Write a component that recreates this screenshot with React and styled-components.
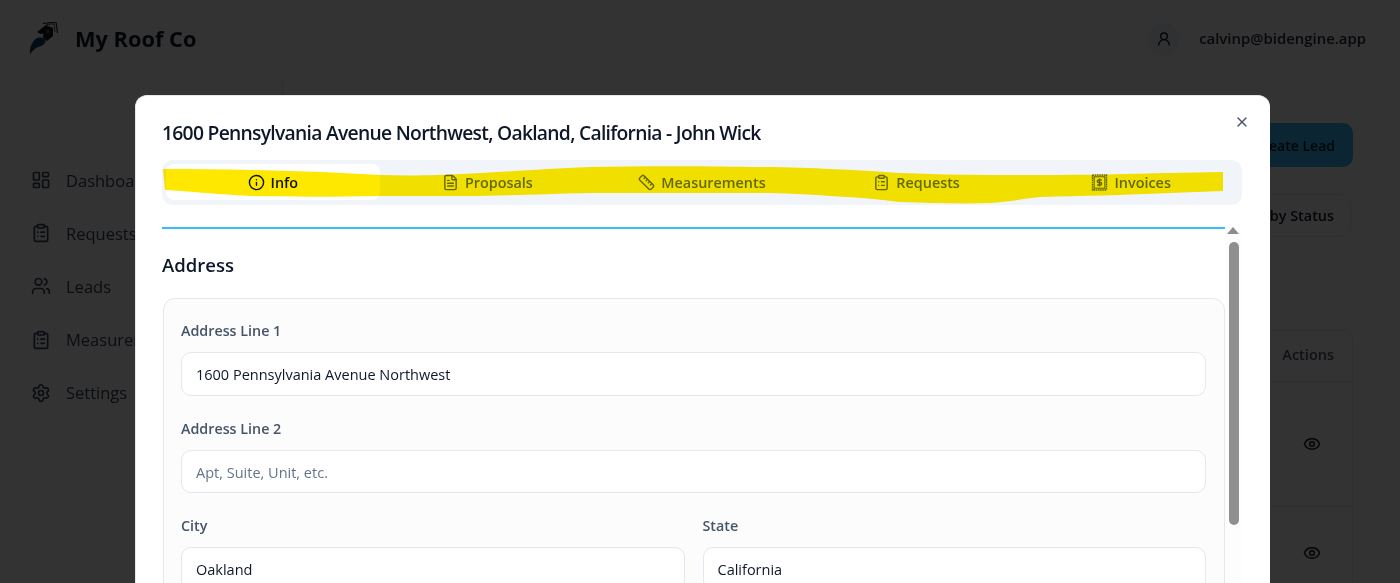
import React from "react";
import styled, { createGlobalStyle } from "styled-components";
import {
  LayoutDashboard, ClipboardList, Users, Settings, Info, FileText, Ruler, X, Eye, UserRound,
} from "lucide-react";

const Global = createGlobalStyle`
  html, body { margin: 0; height: 100%; overflow: hidden; background: #fff; }
  body { font-family: "Open Sans", "Noto Sans", sans-serif; color: #0f172a; }
  * { box-sizing: border-box; }
`;

const Page = styled.div`
  width: 1400px; height: 583px; overflow: hidden; display: flex; flex-direction: column; position: relative;
`;
const Header = styled.header`
  height: 78px; flex: none; display: flex; align-items: center; justify-content: space-between; padding: 0 34px 0 29px;
`;
const Brand = styled.div`display: flex; align-items: center; gap: 16px;`;
const BrandName = styled.span`font-size: 21.8px; font-weight: 700; color: #0f172a; padding-bottom: 2px;`;
const UserBox = styled.div`display: flex; align-items: center; gap: 19px;`;
const Avatar = styled.span`
  width: 33px; height: 33px; border-radius: 50%; background: #f1f5f9; display: flex; align-items: center; justify-content: center; color: #0f172a;
`;
const Email = styled.span`font-size: 14.9px; font-weight: 600; color: #1e293b; padding-bottom: 2px;`;
const Body = styled.div`flex: 1; display: flex; min-height: 0;`;
const Sidebar = styled.nav`
  width: 283px; flex: none; border-right: 1px solid #e2e8f0; padding: 89px 0 0 31px; display: flex; flex-direction: column; gap: 27.2px;
`;
const NavItem = styled.div`display: flex; align-items: center; gap: 15px; height: 26px; font-size: 16.5px; color: #334155;`;
const Main = styled.main`flex: 1; padding: 45px 47px 0 24px; display: flex; flex-direction: column; align-items: flex-end;`;
const PrimaryButton = styled.button`
  flex: none; height: 44px; padding: 0 18px; border: 0; border-radius: 10px; background: #38bdf8; color: #0f172a; font: 600 14px "Open Sans", sans-serif; display: flex; align-items: center; justify-content: center;
`;
const OutlineButton = styled.button`
  flex: none; margin-top: 27px; margin-right: 2px; height: 43px; padding: 0 16px; border: 1px solid #e2e8f0; border-radius: 10px; background: #fff; color: #0f172a; font: 600 14.4px "Open Sans", sans-serif;
`;
const Table = styled.div`
  margin-top: 93px; width: 100%; border: 1px solid #e2e8f0; border-radius: 10px; flex: none;
`;
const HeadRow = styled.div`height: 51px; display: flex; align-items: center; justify-content: flex-end; padding: 0 18px 4px 0; font-size: 14.5px; font-weight: 600; color: #475569; border-bottom: 1px solid #e2e8f0;`;
const Row = styled.div`height: ${p => p.$h}px; display: flex; align-items: center; justify-content: flex-end; padding-right: 31px; border-bottom: 1px solid #e2e8f0; color: #0f172a;`;

const Overlay = styled.div`position: absolute; inset: 0; background: rgba(0,0,0,.8);`;
const Modal = styled.section`
  position: absolute; left: 135px; top: 95px; width: 1135px; height: 560px; background: #fff; border-radius: 12px; padding: 23px 27px 24px 26px; border: 1px solid #e2e8f0; border-width: 1px 0 0 1px;
`;
const Title = styled.h2`margin: 0; font-size: 19.3px; line-height: 28px; font-weight: 600; letter-spacing: -0.72px; color: #0f172a;`;
const CloseButton = styled.button`
  position: absolute; top: 18px; right: 20px; width: 16px; height: 16px; padding: 0; border: 0; background: none; color: #475569; display: flex;
`;
const TabBar = styled.div`
  position: relative; margin-top: 13px; height: 45px; border-radius: 10px; background: #f1f5f9; padding: 4px; display: grid; grid-template-columns: repeat(5, 1fr); gap: 1px; width: 1080px;
`;
const Tab = styled.div`
  height: 36px; border-radius: 8px; background: ${p => (p.$active ? "#fff" : "transparent")}; color: ${p => (p.$active ? "#0f172a" : "#64748b")}; display: flex; align-items: center; justify-content: center; gap: 6px; font-size: 14.4px; font-weight: 600;
`;
const Highlight = styled.svg`
  position: absolute; left: 0; top: 0; width: 1080px; height: 45px; mix-blend-mode: multiply; pointer-events: none; overflow: visible;
`;
const ScrollArea = styled.div`display: flex; margin-top: 22px;`;
const Content = styled.div`width: 1063px; border-top: 2px solid #38bdf8; flex: none;`;
const SectionTitle = styled.h3`margin: 22px 0 19px; font-size: 18.5px; line-height: 28px; font-weight: 600; color: #0f172a;`;
const Card = styled.div`
  border: 1px solid #e2e8f0; border-radius: 12px; background: #fcfcfc; padding: 21px 18px 0 17px; margin-left: 1px; display: flex; flex-direction: column; gap: 22px; height: 400px;
`;
const Field = styled.div`display: flex; flex-direction: column; gap: 10px; min-width: 0;`;
const ColumnField = styled(Field)`flex: 1;`;
const Label = styled.label`font-size: 14.3px; line-height: 22px; font-weight: 600; color: #475569;`;
const Input = styled.input`
  width: 100%; height: 43.5px; flex: none; border: 1px solid #e2e8f0; border-radius: 10px; background: #fff; padding: 2px 14px 0; font: 400 14.5px "Open Sans", sans-serif; color: #0f172a;
  &::placeholder { color: #64748b; opacity: 1; }
`;
const Columns = styled.div`display: flex; gap: 18px;`;
const Scrollbar = styled.div`width: 16px; flex: none; display: flex; flex-direction: column; align-items: center; background: #fdfdfd; height: 400px;`;
const ArrowUp = styled.span`
  width: 0; height: 0; border-left: 6px solid transparent; border-right: 6px solid transparent; border-bottom: 7px solid #8c8c8c;
`;
const Thumb = styled.span`width: 10px; height: 283px; margin-top: 8px; margin-left: 2px; background: #8f8f8f; border-radius: 5px;`;

const InvoiceIcon = ({ size = 16 }) => (
  <svg width={size} height={size} viewBox="0 0 16 16" fill="none" stroke="currentColor">
    <rect x="1.5" y="1" width="13" height="14" strokeWidth="1.5" strokeDasharray="1.5 0.6" />
    <rect x="3" y="2.6" width="10" height="10.8" strokeWidth="1" />
    <path d="M10.200 5.600H7.200a1.200 1.200 0 0 0 0 2.400h1.600a1.200 1.200 0 0 1 0 2.400H5.800M8 4.300v7.400" strokeWidth="1.400" />
  </svg>
);
const Logo = () => (
  <svg width="30" height="34" viewBox="0 0 30 34" fill="none">
    <path d="M8 10 17 3l7 3v8l-6 5-4-4 .5-3.500-3 .5Z" fill="#141414" />
    <path d="M17 7.500h3.500v4H17Z" fill="#4a4a4a" />
    <path d="M14 1.500 27 0l1.500 11" stroke="#161616" strokeWidth="1.100" />
    <path d="M17 2.500 25 1.800l1 8" stroke="#161616" strokeWidth="0.800" />
    <path d="M10 15.500c4-.5 7 .5 6.500 3.500-.5 3.500-4.500 5.500-7.500 6-2.500 1-5.500 3.500-8 7.500-.5-5 .5-9.500 3-12.500C5.500 17.500 7.500 16 10 15.500Z" fill="#0b3f63" />
  </svg>
);

const tabs = [
  ["Info", Info], ["Proposals", FileText], ["Measurements", Ruler], ["Requests", ClipboardList], ["Invoices", InvoiceIcon],
];
const nav = [
  ["Dashboard", LayoutDashboard], ["Requests", ClipboardList], ["Leads", Users], ["Measurements", ClipboardList], ["Settings", Settings],
];

export default function App() {
  return (
    <Page>
      <Global />
      <Header>
        <Brand><Logo /><BrandName>My Roof Co</BrandName></Brand>
        <UserBox>
          <Avatar><UserRound size={16} /></Avatar>
          <Email>calvinp@bidengine.app</Email>
        </UserBox>
      </Header>
      <Body>
        <Sidebar>
          {nav.map(([label, Icon]) => (
            <NavItem key={label}><Icon size={20} />{label}</NavItem>
          ))}
        </Sidebar>
        <Main>
          <PrimaryButton>Create Lead</PrimaryButton>
          <OutlineButton>Filter by Status</OutlineButton>
          <Table>
            <HeadRow>Actions</HeadRow>
            <Row $h={125}><Eye size={18} /></Row>
            <Row $h={93}><Eye size={18} /></Row>
          </Table>
        </Main>
      </Body>
      <Overlay />
      <Modal>
        <Title>1600 Pennsylvania Avenue Northwest, Oakland, California - John Wick</Title>
        <CloseButton aria-label="Close"><X size={16} /></CloseButton>
        <TabBar>
          {tabs.map(([label, Icon], i) => (
            <Tab key={label} $active={i === 0}><Icon size={17} />{label}</Tab>
          ))}
          <Highlight viewBox="0 0 1080 45" preserveAspectRatio="none">
            <path d="M1 9 C30 9 60 9 88 10 C140 11 180 13 218 15 C250 16 280 15 300 14 C340 12 380 9 428 7 C480 6 540 6 588 7 C620 7 650 8 668 9 C700 10 720 12 738 13 C770 14 800 15 828 15 C850 15 860 15 878 15 C920 15 970 14 1008 13 L1061 12 L1061 31 L1008 33 C960 35 920 36 878 37 C860 39 845 42 828 43 C800 44 770 43 738 42 C715 39 690 37 668 36 C640 34 610 33 588 33 C530 33 480 33 428 33 C380 34 340 36 300 36 L218 36 C170 37 130 37 88 36 C50 34 25 31 3 30 Z" fill="#ffe800" />
          </Highlight>
        </TabBar>
        <ScrollArea>
          <Content>
            <SectionTitle>Address</SectionTitle>
            <Card>
              <Field>
                <Label>Address Line 1</Label>
                <Input readOnly value="1600 Pennsylvania Avenue Northwest" />
              </Field>
              <Field>
                <Label>Address Line 2</Label>
                <Input readOnly placeholder="Apt, Suite, Unit, etc." />
              </Field>
              <Columns>
                <ColumnField>
                  <Label>City</Label>
                  <Input readOnly value="Oakland" />
                </ColumnField>
                <ColumnField>
                  <Label>State</Label>
                  <Input readOnly value="California" />
                </ColumnField>
              </Columns>
            </Card>
          </Content>
          <Scrollbar><ArrowUp /><Thumb /></Scrollbar>
        </ScrollArea>
      </Modal>
    </Page>
  );
}
